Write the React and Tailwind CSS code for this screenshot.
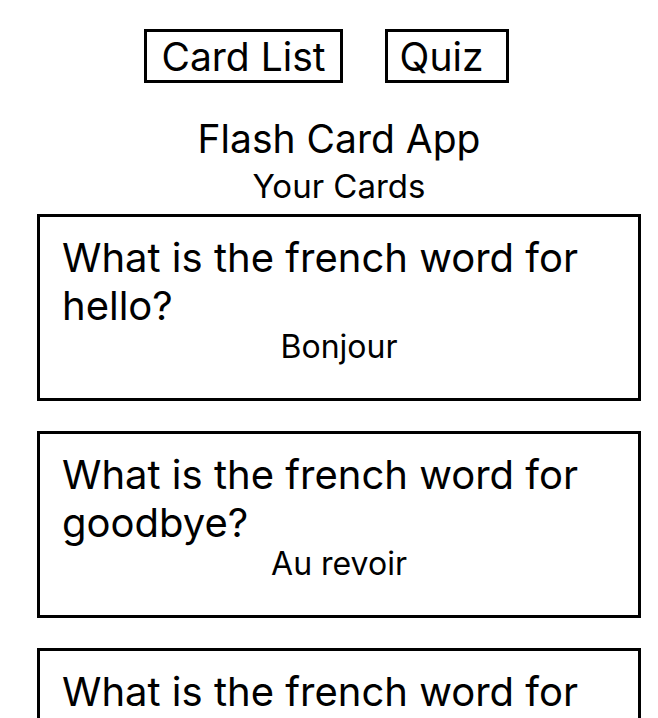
const CARDS = [
  { q: 'What is the french word for hello?', a: 'Bonjour' },
  { q: 'What is the french word for goodbye?', a: 'Au revoir' },
  { q: 'What is the french word for thank you?', a: 'Merci' },
];

export default function App() {
  return (
    <div className="min-h-screen bg-white text-black font-['Inter',sans-serif]">
      <nav className="flex justify-center gap-[42px] pt-[29px] pr-[5px]">
        <button className="border-[3px] border-black px-[14px] h-[54px] text-[39px] leading-none">Card List</button>
        <button className="border-[3px] border-black w-[124px] pl-[12px] text-left h-[54px] text-[39px] leading-none">Quiz</button>
      </nav>

      <div className="pl-[37px] pr-[17px]">
        <h1 className="mt-[34px] text-center text-[39px] leading-[44px]">Flash Card App</h1>
        <h2 className="mt-[5px] text-center text-[33px] leading-[40px]">Your Cards</h2>

        <div className="mt-[8px] flex flex-col gap-[30px]">
          {CARDS.map((c) => (
            <div key={c.a} className="border-[3px] border-black h-[187px] px-[22px] pt-[17px]">
              <p className="text-[40px] leading-[48px]">{c.q}</p>
              <p className="text-center text-[32px] leading-[34px]">{c.a}</p>
            </div>
          ))}
        </div>
      </div>
    </div>
  );
}
